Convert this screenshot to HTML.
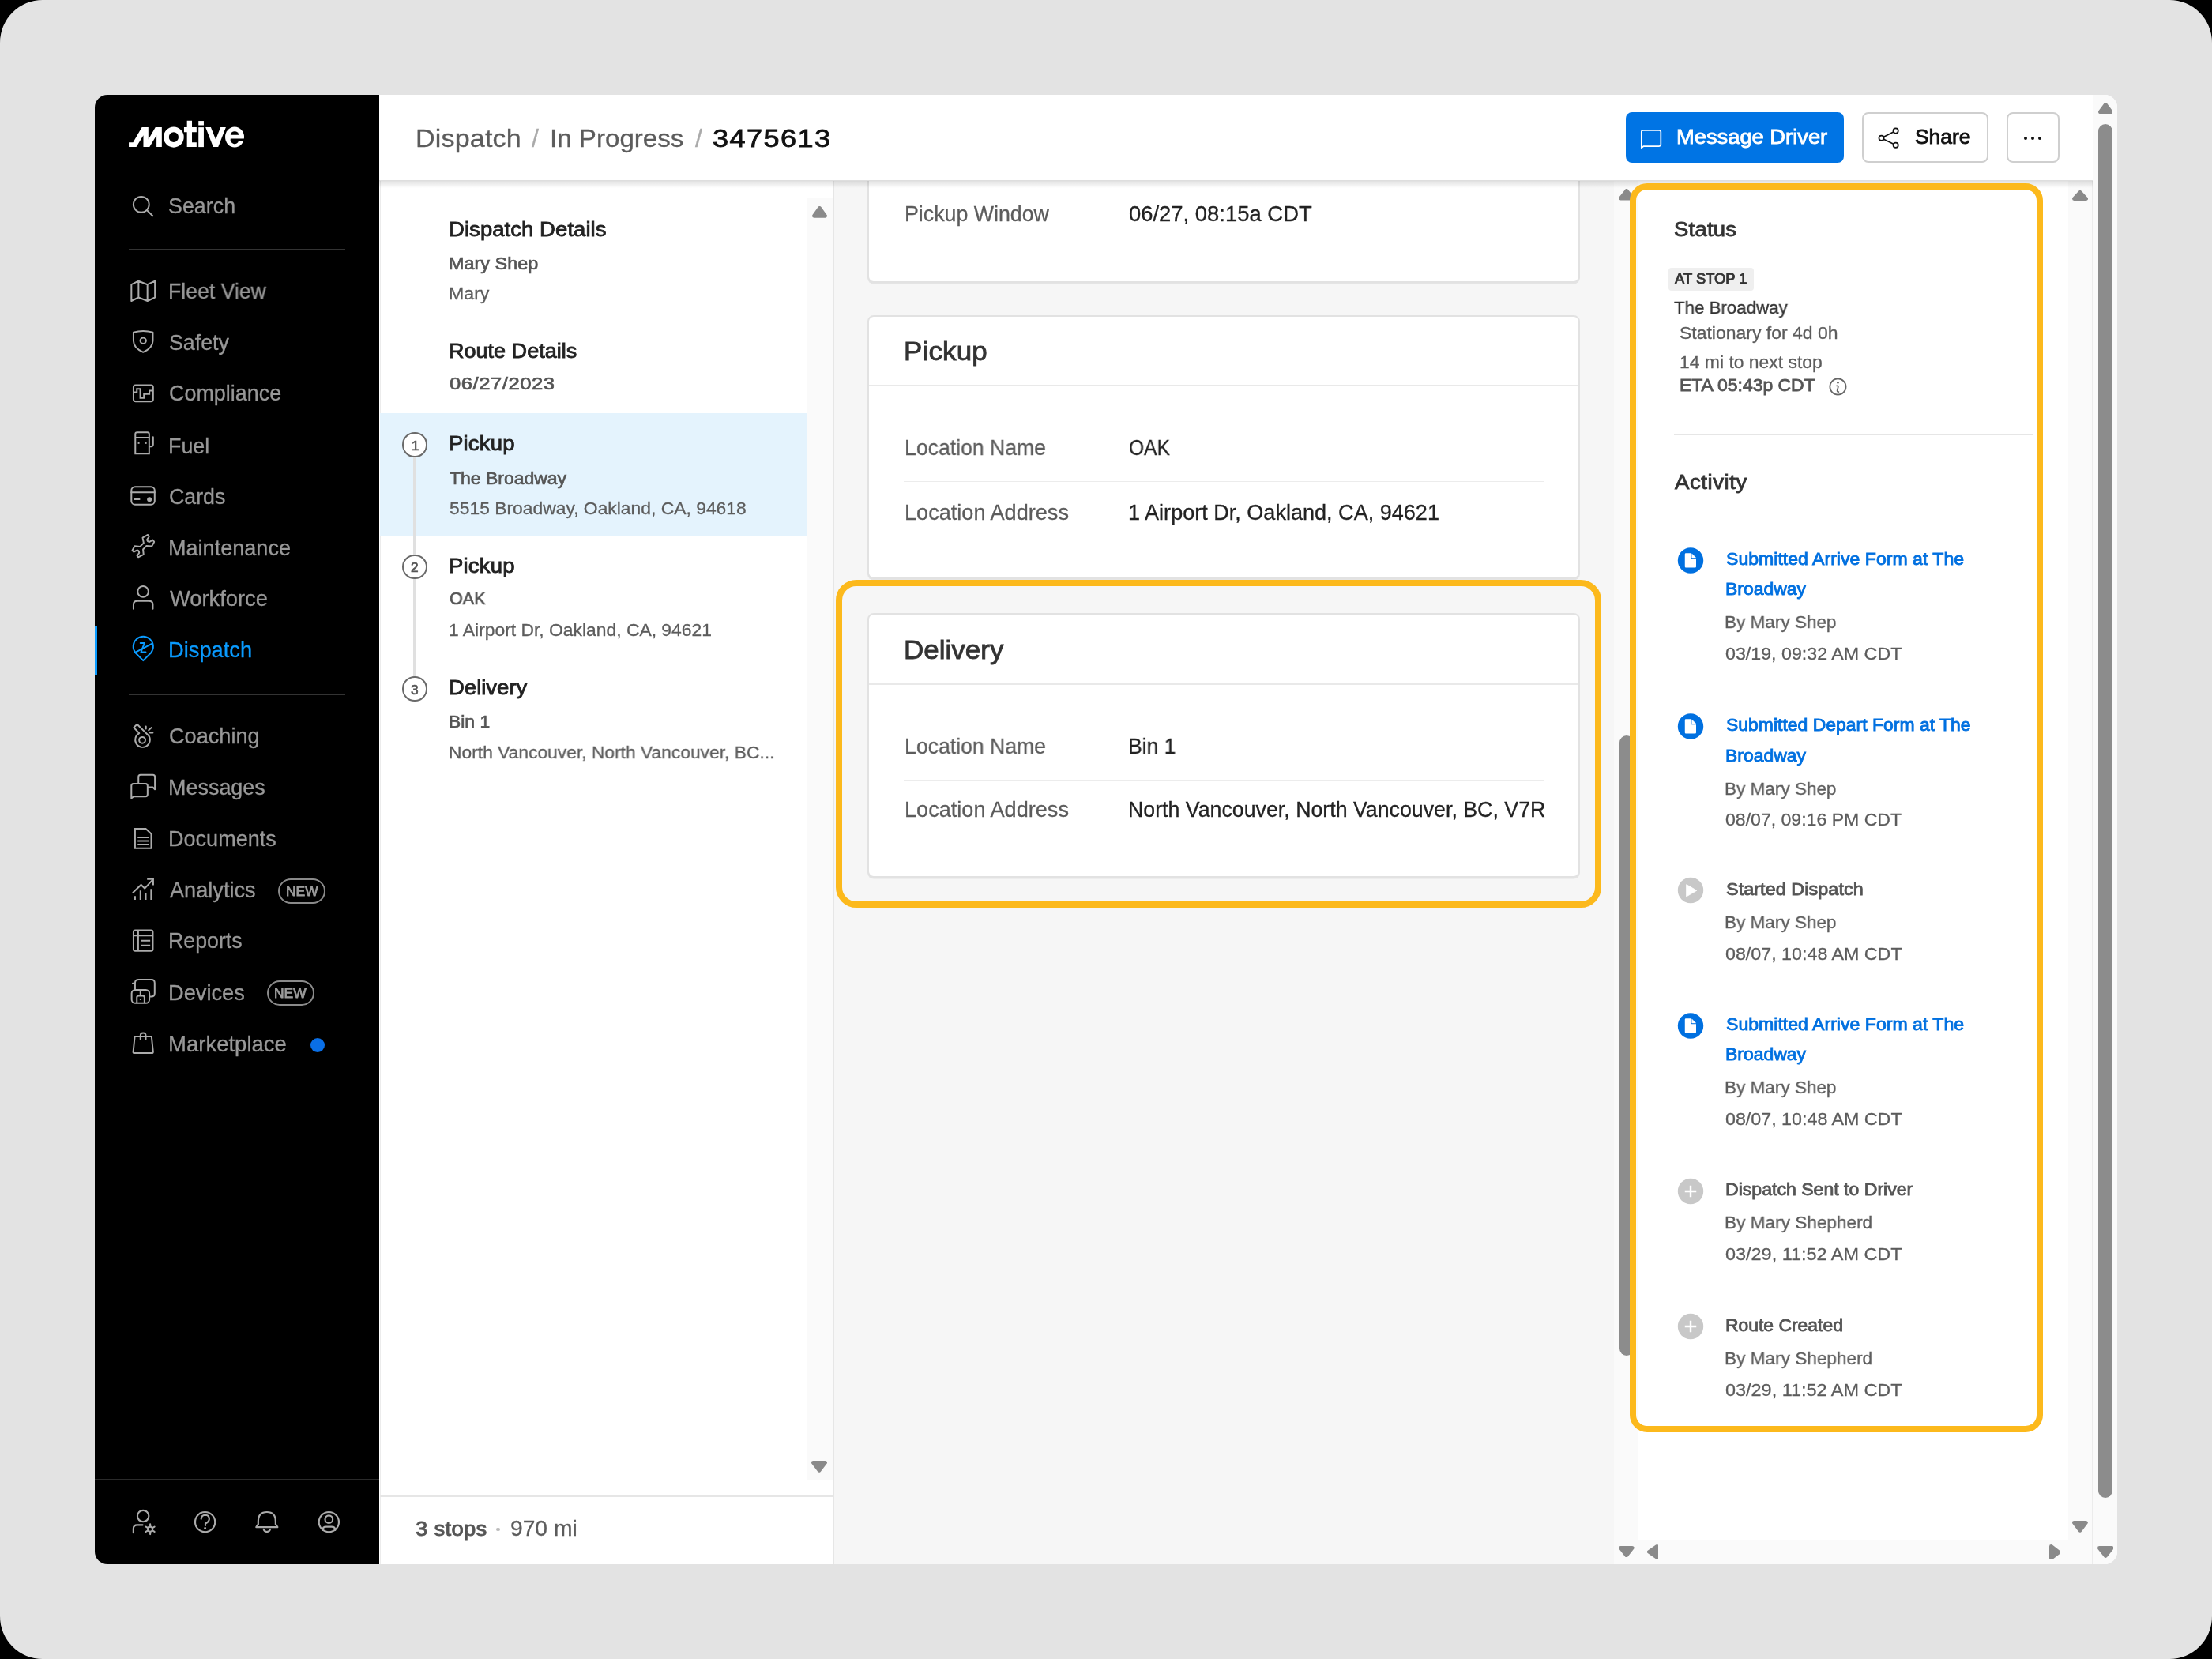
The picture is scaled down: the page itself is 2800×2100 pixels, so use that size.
<!DOCTYPE html>
<html><head><meta charset="utf-8"><style>
html,body{margin:0;padding:0;}
body{width:2800px;height:2100px;background:#000;position:relative;overflow:hidden;font-family:"Liberation Sans",sans-serif;}
.t{position:absolute;white-space:nowrap;line-height:1;will-change:transform;}
#bg{position:absolute;left:0;top:0;width:2800px;height:2100px;background:#e3e3e3;border-radius:54px;}
</style></head><body><div id="bg"></div>
<div style="position:absolute;left:120px;top:120px;width:360px;height:1860px;background:#000;border-radius:16px 0 0 16px;"></div>
<div style="position:absolute;left:480px;top:120px;width:2200px;height:1860px;background:#fff;border-radius:0 16px 16px 0;"></div>
<div style="position:absolute;left:1055px;top:229px;width:1019px;height:1751px;background:#f6f6f6;"></div>
<div style="position:absolute;left:1054px;top:229px;width:2px;height:1751px;background:#e6e6e6;"></div>
<div style="position:absolute;left:481px;top:229px;width:1px;height:1751px;background:#ececec;"></div>
<div style="position:absolute;left:1022px;top:251px;width:32px;height:1623px;background:#fafafa;"></div>
<div style="position:absolute;left:2043px;top:229px;width:31px;height:1751px;background:#fafafa;"></div>
<div style="position:absolute;left:2073px;top:229px;width:1px;height:1751px;background:#e2e2e2;"></div>
<div style="position:absolute;left:2618px;top:229px;width:30px;height:1720px;background:#fafafa;"></div>
<div style="position:absolute;left:2074px;top:1949px;width:574px;height:31px;background:#fafafa;"></div>
<div style="position:absolute;left:2648px;top:120px;width:1px;height:1860px;background:#ececec;"></div>
<div style="position:absolute;left:2649px;top:120px;width:31px;height:1860px;background:#fafafa;border-radius:0 16px 16px 0;"></div>
<div style="position:absolute;left:481px;top:523px;width:541px;height:156px;background:#e4f3fd;"></div>
<div style="position:absolute;left:481px;top:1893px;width:573px;height:2px;background:#e6e6e6;"></div>
<svg style="position:absolute;left:155px;top:140px;" width="165" height="60" viewBox="0 0 2212 804"><path fill="#fff" d="M108,618 L108,540 L180,540 L330,283 L440,283 L440,490 L560,283 L668,283 L668,618 L578,618 L578,420 L460,618 L355,618 L355,420 L235,618 Z"/><path fill="#fff" fill-rule="evenodd" d="M698,450 A172,175 0 1 0 1042,450 A172,175 0 1 0 698,450 Z M788,450 A82,86 0 1 0 952,450 A82,86 0 1 0 788,450 Z"/><path fill="#fff" d="M1095,170 H1180 V283 H1258 V365 H1180 V540 H1258 V618 H1095 V365 H1045 V283 H1095 Z"/><rect fill="#fff" x="1290" y="175" width="90" height="73"/><rect fill="#fff" x="1290" y="283" width="90" height="335"/><path fill="#fff" d="M1410,283 H1500 L1583,490 L1665,283 H1755 L1625,618 H1540 Z"/><ellipse fill="#fff" cx="1904" cy="449" rx="161" ry="174"/><path fill="#000" d="M1834,411 A70,58 0 0 1 1974,411 Z"/><path fill="#000" d="M1834,475 H2070 V511 H1972 A70,72 0 0 1 1834,475 Z"/></svg>
<svg style="position:absolute;left:160px;top:240px;" width="45" height="150" viewBox="0 0 498 1659"><g fill="none" stroke="#ababab" stroke-width="22" stroke-linecap="round" stroke-linejoin="round"><circle cx="208" cy="208" r="110"/><line x1="292" y1="292" x2="368" y2="368"/><path d="M70,1330 L170,1280 L295,1330 L400,1280 L400,1510 L295,1560 L170,1510 L70,1560 Z M170,1280 V1510 M295,1330 V1560"/></g></svg>
<div class="t" style="left:213.49px;top:247.95px;font-size:26.76px;color:#989898;-webkit-text-stroke:0.3px #989898;transform:scaleX(1.0037);transform-origin:0 0;">Search</div>
<div style="position:absolute;left:163px;top:315px;width:274px;height:2px;background:#333;"></div>
<div style="position:absolute;left:163px;top:878px;width:274px;height:2px;background:#333;"></div>
<svg style="position:absolute;left:160px;top:415px;" width="45" height="110" viewBox="0 0 679 1659"><g fill="none" stroke="#ababab" stroke-width="30" stroke-linecap="round" stroke-linejoin="round"><path d="M135,85 Q320,35 505,85 V250 Q505,385 320,465 Q135,385 135,250 Z"/><circle cx="320" cy="245" r="55"/><rect x="135" y="1095" width="375" height="310" rx="40"/><path d="M150,1230 H200 V1165 H265 V1340 H335 V1265 H440 V1200 H495" stroke-linecap="butt" stroke-linejoin="miter"/></g></svg>
<svg style="position:absolute;left:160px;top:540px;" width="45" height="110" viewBox="0 0 679 1659"><g fill="none" stroke="#ababab" stroke-width="30" stroke-linecap="round" stroke-linejoin="round"><path d="M170,515 V145 Q170,110 205,110 H400 Q435,110 435,145 V515 Z M170,210 H435 M435,380 H470 Q510,380 510,340 V200" stroke-linejoin="miter"/><rect x="95" y="1150" width="445" height="340" rx="70"/><path d="M95,1255 H540 M155,1388 H250"/></g><rect x="220" y="300" width="30" height="30" fill="#ababab"/><rect x="357" y="300" width="30" height="30" fill="#ababab"/><circle cx="440" cy="1390" r="45" fill="#ababab"/></svg>
<svg style="position:absolute;left:160px;top:670px;" width="45" height="110" viewBox="0 0 679 1659"><g fill="none" stroke="#ababab" stroke-width="30" stroke-linecap="round" stroke-linejoin="round"><path d="M310,160 L410,105 L432,140 L395,195 Q400,240 440,240 L505,205 L530,240 L485,325 L380,318 L318,385 L328,480 L228,532 L205,505 L245,450 Q240,400 200,400 L140,432 L112,405 L158,320 L262,330 L330,262 Z"/><circle cx="318" cy="1190" r="103"/><path d="M135,1520 V1440 Q135,1370 205,1370 H435 Q505,1370 505,1440 V1520"/></g></svg>
<svg style="position:absolute;left:160px;top:800px;" width="45" height="155" viewBox="0 0 482 1659"><g fill="none" stroke="#0a9bff" stroke-width="21" stroke-linecap="round" stroke-linejoin="round"><path d="M122,280 A135,135 0 1 1 334,280 L228,386 Z"/><path d="M130,272 L345,158"/><path d="M190,150 H245 L198,272 H262"/></g><g fill="none" stroke="#ababab" stroke-width="21" stroke-linecap="round" stroke-linejoin="round"><path d="M145,1250 L100,1295 L175,1372 A100,100 0 1 0 300,1402 Z"/><circle cx="215" cy="1465" r="42"/><path d="M265,1280 V1312 M302,1330 L338,1297 M320,1365 H358"/></g></svg>
<svg style="position:absolute;left:160px;top:975px;" width="45" height="110" viewBox="0 0 679 1659"><g fill="none" stroke="#ababab" stroke-width="30" stroke-linecap="round" stroke-linejoin="round"><path d="M230,245 V125 Q230,85 270,85 H505 Q545,85 545,125 V365 L505,325 H420"/><path d="M95,535 V295 Q95,255 135,255 H365 Q405,255 405,295 V460 Q405,500 365,500 H140 Z"/><path d="M165,1490 V1115 H370 L475,1215 V1490 Z" stroke-linejoin="miter" stroke-linecap="butt"/><path d="M215,1283 H425 M215,1350 H425 M215,1418 H425" stroke-linecap="butt"/></g></svg>
<svg style="position:absolute;left:160px;top:1105px;" width="45" height="110" viewBox="0 0 679 1659"><g fill="none" stroke="#ababab" stroke-width="30" stroke-linejoin="miter"><path d="M120,380 L280,225 L350,295 L505,125"/><path d="M395,117 H512 V235"/><path d="M165,440 V512 M268,335 V512 M370,375 V512 M473,305 V512"/><rect x="135" y="1095" width="370" height="395" rx="35"/><path d="M135,1195 H505 M225,1095 V1490 M280,1295 H455 M280,1385 H455"/></g></svg>
<svg style="position:absolute;left:160px;top:1235px;" width="45" height="110" viewBox="0 0 679 1659"><g fill="none" stroke="#ababab" stroke-width="30" stroke-linecap="round" stroke-linejoin="round"><path d="M165,265 V140 Q165,75 235,75 H475 Q540,75 540,140 V335 Q540,400 475,400 H445 M120,145 H165"/><rect x="100" y="270" width="340" height="255" rx="70"/><path d="M200,510 V420 Q200,385 235,385 H310 Q345,385 345,420 V510 M268,270 V385"/><path d="M160,1160 H480 L510,1455 Q512,1480 485,1480 H155 Q128,1480 130,1455 Z"/><path d="M268,1215 V1145 Q268,1095 320,1095 Q370,1095 370,1145 V1215"/></g><rect x="255" y="438" width="28" height="28" fill="#ababab"/></svg>
<div class="t" style="left:212.75px;top:356.45px;font-size:26.76px;color:#989898;-webkit-text-stroke:0.3px #989898;transform:scaleX(0.9950);transform-origin:0 0;">Fleet View</div>
<div class="t" style="left:213.74px;top:421.45px;font-size:26.76px;color:#989898;-webkit-text-stroke:0.3px #989898;">Safety</div>
<div class="t" style="left:213.60px;top:484.95px;font-size:26.76px;color:#989898;-webkit-text-stroke:0.3px #989898;transform:scaleX(1.0062);transform-origin:0 0;">Compliance</div>
<div class="t" style="left:212.74px;top:551.95px;font-size:26.76px;color:#989898;-webkit-text-stroke:0.3px #989898;transform:scaleX(1.0033);transform-origin:0 0;">Fuel</div>
<div class="t" style="left:213.62px;top:615.95px;font-size:26.76px;color:#989898;-webkit-text-stroke:0.3px #989898;transform:scaleX(0.9940);transform-origin:0 0;">Cards</div>
<div class="t" style="left:212.72px;top:680.95px;font-size:26.76px;color:#989898;-webkit-text-stroke:0.3px #989898;transform:scaleX(1.0121);transform-origin:0 0;">Maintenance</div>
<div class="t" style="left:214.82px;top:744.95px;font-size:26.76px;color:#989898;-webkit-text-stroke:0.3px #989898;transform:scaleX(1.0210);transform-origin:0 0;">Workforce</div>
<div class="t" style="left:212.70px;top:809.95px;font-size:26.76px;color:#0a9bff;-webkit-text-stroke:0.3px #0a9bff;transform:scaleX(1.0196);transform-origin:0 0;">Dispatch</div>
<div class="t" style="left:213.59px;top:918.95px;font-size:26.76px;color:#989898;-webkit-text-stroke:0.3px #989898;transform:scaleX(1.0148);transform-origin:0 0;">Coaching</div>
<div class="t" style="left:212.73px;top:983.95px;font-size:26.76px;color:#989898;-webkit-text-stroke:0.3px #989898;transform:scaleX(1.0073);transform-origin:0 0;">Messages</div>
<div class="t" style="left:212.72px;top:1048.95px;font-size:26.76px;color:#989898;-webkit-text-stroke:0.3px #989898;transform:scaleX(1.0112);transform-origin:0 0;">Documents</div>
<div class="t" style="left:214.88px;top:1113.95px;font-size:26.76px;color:#989898;-webkit-text-stroke:0.3px #989898;transform:scaleX(1.0149);transform-origin:0 0;">Analytics</div>
<div class="t" style="left:212.74px;top:1177.95px;font-size:26.76px;color:#989898;-webkit-text-stroke:0.3px #989898;">Reports</div>
<div class="t" style="left:212.71px;top:1243.95px;font-size:26.76px;color:#989898;-webkit-text-stroke:0.3px #989898;transform:scaleX(1.0177);transform-origin:0 0;">Devices</div>
<div class="t" style="left:212.68px;top:1308.95px;font-size:26.76px;color:#989898;-webkit-text-stroke:0.3px #989898;transform:scaleX(1.0285);transform-origin:0 0;">Marketplace</div>
<div style="position:absolute;left:120px;top:792px;width:3px;height:63px;background:#0a9bff;"></div>
<div style="position:absolute;left:352px;top:1112px;width:60px;height:32px;border:2px solid #8a8a8a;border-radius:16px;box-sizing:border-box;"></div>
<div class="t" style="left:361.79px;top:1119.73px;font-size:17.26px;color:#9c9c9c;-webkit-text-stroke:0.85px #9c9c9c;transform:scaleX(1.0088);transform-origin:0 0;">NEW</div>
<div style="position:absolute;left:337.5px;top:1241px;width:60.5px;height:32px;border:2px solid #8a8a8a;border-radius:16px;box-sizing:border-box;"></div>
<div class="t" style="left:347.29px;top:1248.73px;font-size:17.26px;color:#9c9c9c;-webkit-text-stroke:0.85px #9c9c9c;transform:scaleX(1.0088);transform-origin:0 0;">NEW</div>
<div style="position:absolute;left:393px;top:1313.5px;width:18px;height:18px;border-radius:50%;background:#0a6fe6"></div>
<div style="position:absolute;left:120px;top:1872px;width:360px;height:2px;background:#2a2a2a;"></div>
<svg style="position:absolute;left:160px;top:1900px;" width="280" height="55" viewBox="0 0 2212 434"><g fill="none" stroke="#ababab" stroke-width="17" stroke-linecap="round" stroke-linejoin="round"><circle cx="167" cy="150" r="57"/><path d="M70,318 V278 Q70,240 108,240 H162"/><circle cx="238" cy="282" r="24"/><path d="M238,232 V252 M238,312 V332 M195,257 L212,267 M264,297 L281,307 M195,307 L212,297 M264,267 L281,257"/><circle cx="787" cy="210" r="100"/><path d="M748,180 Q750,140 790,140 Q830,142 828,182 Q826,208 790,225 V245"/><path d="M1298,262 L1318,232 V205 Q1318,110 1405,110 Q1492,110 1492,205 V232 L1512,262 Z"/><path d="M1372,283 A34,34 0 0 0 1438,283"/><circle cx="2025" cy="210" r="100"/><circle cx="2025" cy="183" r="38"/><path d="M1962,292 Q1962,258 1998,258 H2052 Q2088,258 2088,292"/></g><circle cx="787" cy="272" r="11" fill="#ababab"/></svg>
<div style="position:absolute;left:480px;top:120px;width:2169px;height:109px;background:#fff;z-index:5;"></div>
<div style="position:absolute;left:480px;top:228px;width:2169px;height:1px;background:rgba(0,0,0,0.13);z-index:5;"></div>
<div style="position:absolute;left:480px;top:229px;width:2169px;height:9px;background:linear-gradient(rgba(0,0,0,0.12),rgba(0,0,0,0));z-index:5;"></div>
<div class="t" style="left:526.15px;top:159.37px;font-size:32.16px;color:#5c5c5c;-webkit-text-stroke:0.3px #5c5c5c;letter-spacing:0.143px;transform:scaleX(1.0600);transform-origin:0 0;z-index:6;">Dispatch</div>
<div class="t" style="left:673.45px;top:159.37px;font-size:32.16px;color:#aaa;-webkit-text-stroke:0.3px #aaa;z-index:6;">/</div>
<div class="t" style="left:695.89px;top:159.37px;font-size:32.16px;color:#5c5c5c;-webkit-text-stroke:0.3px #5c5c5c;transform:scaleX(1.0303);transform-origin:0 0;z-index:6;">In Progress</div>
<div class="t" style="left:879.95px;top:159.37px;font-size:32.16px;color:#aaa;-webkit-text-stroke:0.3px #aaa;z-index:6;">/</div>
<div class="t" style="left:901.94px;top:159.78px;font-size:31.36px;color:#111;-webkit-text-stroke:0.85px #111;letter-spacing:1.251px;transform:scaleX(1.1500);transform-origin:0 0;z-index:6;">3475613</div>
<div style="position:absolute;left:2058px;top:142px;width:276px;height:64px;background:#0074e4;border-radius:8px;z-index:6;"></div>
<svg style="position:absolute;left:2070px;top:155px;z-index:7;" width="40" height="40" viewBox="0 0 1659 1659"><path d="M325,1335 V500 Q325,410 415,410 H1250 Q1340,410 1340,500 V1155 Q1340,1245 1250,1245 H440 Z" fill="none" stroke="#fff" stroke-width="72" stroke-linejoin="round"/></svg>
<div class="t" style="left:2122.49px;top:161.06px;font-size:25.96px;color:#fff;-webkit-text-stroke:0.85px #fff;transform:scaleX(1.0520);transform-origin:0 0;z-index:7;">Message Driver</div>
<div style="position:absolute;left:2357px;top:142px;width:160px;height:64px;border:2px solid #cfcfcf;border-radius:8px;box-sizing:border-box;z-index:6;"></div>
<svg style="position:absolute;left:2370px;top:155px;z-index:7;" width="40" height="40" viewBox="0 0 1659 1659"><g fill="none" stroke="#111" stroke-width="72"><circle cx="1230" cy="440" r="130"/><circle cx="480" cy="820" r="130"/><circle cx="1230" cy="1190" r="130"/><path d="M600,760 L1110,500 M600,880 L1110,1130"/></g></svg>
<div class="t" style="left:2424.04px;top:161.06px;font-size:25.96px;color:#111;-webkit-text-stroke:0.85px #111;transform:scaleX(1.0171);transform-origin:0 0;z-index:7;">Share</div>
<div style="position:absolute;left:2540px;top:142px;width:67px;height:64px;border:2px solid #cfcfcf;border-radius:8px;box-sizing:border-box;z-index:6;"></div>
<div style="position:absolute;left:2561.8px;top:172.6px;width:4.4px;height:4.4px;border-radius:50%;background:#111;z-index:7"></div>
<div style="position:absolute;left:2570.8px;top:172.6px;width:4.4px;height:4.4px;border-radius:50%;background:#111;z-index:7"></div>
<div style="position:absolute;left:2579.8px;top:172.6px;width:4.4px;height:4.4px;border-radius:50%;background:#111;z-index:7"></div>
<div class="t" style="left:567.58px;top:277.66px;font-size:25.96px;color:#222;-webkit-text-stroke:0.85px #222;letter-spacing:0.046px;transform:scaleX(1.0600);transform-origin:0 0;">Dispatch Details</div>
<div class="t" style="left:567.83px;top:322.75px;font-size:22.28px;color:#555;-webkit-text-stroke:0.7px #555;transform:scaleX(1.0520);transform-origin:0 0;">Mary Shep</div>
<div class="t" style="left:567.64px;top:359.66px;font-size:22.86px;color:#5c5c5c;-webkit-text-stroke:0.3px #5c5c5c;transform:scaleX(1.0128);transform-origin:0 0;">Mary</div>
<div class="t" style="left:567.61px;top:431.56px;font-size:25.96px;color:#222;-webkit-text-stroke:0.85px #222;transform:scaleX(1.0413);transform-origin:0 0;">Route Details</div>
<div class="t" style="left:568.78px;top:475.35px;font-size:22.28px;color:#555;-webkit-text-stroke:0.7px #555;letter-spacing:0.462px;transform:scaleX(1.1500);transform-origin:0 0;">06/27/2023</div>
<div style="position:absolute;left:523.4px;top:578px;width:3px;height:139px;background:#e0e0e0;"></div>
<div style="position:absolute;left:523.4px;top:733px;width:3px;height:139px;background:#e0e0e0;"></div>
<div style="position:absolute;left:509.15px;top:547.35px;width:31.5px;height:31.5px;border-radius:50%;border:2px solid #6a6a6a;background:#fff;box-sizing:border-box"></div>
<div class="t" style="left:521.05px;top:555.59px;font-size:17.28px;color:#555;-webkit-text-stroke:0.7px #555;">1</div>
<div class="t" style="left:567.68px;top:548.86px;font-size:25.96px;color:#222;-webkit-text-stroke:0.85px #222;letter-spacing:0.181px;transform:scaleX(1.0600);transform-origin:0 0;">Pickup</div>
<div class="t" style="left:569.34px;top:594.95px;font-size:22.28px;color:#555;-webkit-text-stroke:0.7px #555;transform:scaleX(1.0312);transform-origin:0 0;">The Broadway</div>
<div class="t" style="left:568.73px;top:631.56px;font-size:22.86px;color:#5c5c5c;-webkit-text-stroke:0.3px #5c5c5c;">5515 Broadway, Oakland, CA, 94618</div>
<div style="position:absolute;left:509.15px;top:701.65px;width:31.5px;height:31.5px;border-radius:50%;border:2px solid #6a6a6a;background:#fff;box-sizing:border-box"></div>
<div class="t" style="left:519.79px;top:709.89px;font-size:17.28px;color:#555;-webkit-text-stroke:0.7px #555;">2</div>
<div class="t" style="left:567.68px;top:703.56px;font-size:25.96px;color:#222;-webkit-text-stroke:0.85px #222;letter-spacing:0.181px;transform:scaleX(1.0600);transform-origin:0 0;">Pickup</div>
<div class="t" style="left:568.81px;top:747.45px;font-size:22.28px;color:#555;-webkit-text-stroke:0.7px #555;transform:scaleX(0.9669);transform-origin:0 0;">OAK</div>
<div class="t" style="left:567.93px;top:786.26px;font-size:22.86px;color:#5c5c5c;-webkit-text-stroke:0.3px #5c5c5c;">1 Airport Dr, Oakland, CA, 94621</div>
<div style="position:absolute;left:509.15px;top:856.35px;width:31.5px;height:31.5px;border-radius:50%;border:2px solid #6a6a6a;background:#fff;box-sizing:border-box"></div>
<div class="t" style="left:520.00px;top:864.59px;font-size:17.28px;color:#555;-webkit-text-stroke:0.7px #555;">3</div>
<div class="t" style="left:567.68px;top:858.26px;font-size:25.96px;color:#222;-webkit-text-stroke:0.85px #222;transform:scaleX(1.0591);transform-origin:0 0;">Delivery</div>
<div class="t" style="left:567.97px;top:902.95px;font-size:22.28px;color:#555;-webkit-text-stroke:0.7px #555;transform:scaleX(1.0278);transform-origin:0 0;">Bin 1</div>
<div class="t" style="left:567.77px;top:940.66px;font-size:22.86px;color:#5c5c5c;-webkit-text-stroke:0.3px #5c5c5c;transform:scaleX(0.9978);transform-origin:0 0;">North Vancouver, North Vancouver, BC...</div>
<div class="t" style="left:526.32px;top:1922.86px;font-size:25.96px;color:#555;-webkit-text-stroke:0.85px #555;letter-spacing:0.256px;transform:scaleX(1.0600);transform-origin:0 0;">3 stops</div>
<div style="position:absolute;left:628px;top:1933.5px;width:4.5px;height:4.5px;border-radius:50%;background:#bbb"></div>
<div class="t" style="left:645.62px;top:1922.45px;font-size:26.76px;color:#5c5c5c;-webkit-text-stroke:0.3px #5c5c5c;transform:scaleX(1.0544);transform-origin:0 0;">970 mi</div>
<div style="position:absolute;left:1098.3px;top:180px;width:902px;height:178px;background:#fff;border:2px solid #e2e2e2;box-sizing:border-box;box-shadow:0 1.5px 0 rgba(0,0,0,0.07);border-radius:8px;"></div>
<div class="t" style="left:1144.75px;top:257.75px;font-size:26.76px;color:#5c5c5c;-webkit-text-stroke:0.3px #5c5c5c;">Pickup Window</div>
<div class="t" style="left:1429.16px;top:257.75px;font-size:26.76px;color:#222;-webkit-text-stroke:0.3px #222;transform:scaleX(1.0250);transform-origin:0 0;">06/27, 08:15a CDT</div>
<div style="position:absolute;left:1098.3px;top:398.6px;width:902px;height:334.5px;background:#fff;border:2px solid #e2e2e2;box-sizing:border-box;box-shadow:0 1.5px 0 rgba(0,0,0,0.07);border-radius:8px;"></div>
<div style="position:absolute;left:1100.3px;top:487.1px;width:898px;height:2px;background:#e9e9e9;"></div>
<div class="t" style="left:1144.37px;top:428.72px;font-size:32.96px;color:#333;-webkit-text-stroke:0.85px #333;letter-spacing:0.170px;transform:scaleX(1.0600);transform-origin:0 0;">Pickup</div>
<div class="t" style="left:1144.75px;top:553.95px;font-size:26.76px;color:#5c5c5c;-webkit-text-stroke:0.3px #5c5c5c;transform:scaleX(0.9947);transform-origin:0 0;">Location Name</div>
<div class="t" style="left:1429.07px;top:553.95px;font-size:26.76px;color:#222;-webkit-text-stroke:0.3px #222;transform:scaleX(0.9179);transform-origin:0 0;">OAK</div>
<div style="position:absolute;left:1144px;top:608.9000000000001px;width:811px;height:1.5px;background:#ececec;"></div>
<div class="t" style="left:1144.71px;top:635.65px;font-size:26.76px;color:#5c5c5c;-webkit-text-stroke:0.3px #5c5c5c;transform:scaleX(1.0133);transform-origin:0 0;">Location Address</div>
<div class="t" style="left:1428.22px;top:635.65px;font-size:26.76px;color:#222;-webkit-text-stroke:0.3px #222;transform:scaleX(1.0112);transform-origin:0 0;">1 Airport Dr, Oakland, CA, 94621</div>
<div style="position:absolute;left:1098.3px;top:776.4px;width:902px;height:334.5px;background:#fff;border:2px solid #e2e2e2;box-sizing:border-box;box-shadow:0 1.5px 0 rgba(0,0,0,0.07);border-radius:8px;"></div>
<div style="position:absolute;left:1100.3px;top:864.9px;width:898px;height:2px;background:#e9e9e9;"></div>
<div class="t" style="left:1144.37px;top:806.52px;font-size:32.96px;color:#333;-webkit-text-stroke:0.85px #333;letter-spacing:0.034px;transform:scaleX(1.0600);transform-origin:0 0;">Delivery</div>
<div class="t" style="left:1144.75px;top:931.75px;font-size:26.76px;color:#5c5c5c;-webkit-text-stroke:0.3px #5c5c5c;transform:scaleX(0.9947);transform-origin:0 0;">Location Name</div>
<div class="t" style="left:1428.06px;top:931.75px;font-size:26.76px;color:#222;-webkit-text-stroke:0.3px #222;transform:scaleX(0.9918);transform-origin:0 0;">Bin 1</div>
<div style="position:absolute;left:1144px;top:986.7px;width:811px;height:1.5px;background:#ececec;"></div>
<div class="t" style="left:1144.71px;top:1011.75px;font-size:26.76px;color:#5c5c5c;-webkit-text-stroke:0.3px #5c5c5c;transform:scaleX(1.0133);transform-origin:0 0;">Location Address</div>
<div class="t" style="left:1428.04px;top:1011.75px;font-size:26.76px;color:#222;-webkit-text-stroke:0.3px #222;">North Vancouver, North Vancouver, BC, V7R</div>
<div class="t" style="left:2119.01px;top:277.66px;font-size:25.96px;color:#333;-webkit-text-stroke:0.85px #333;letter-spacing:0.195px;transform:scaleX(1.0600);transform-origin:0 0;">Status</div>
<div style="position:absolute;left:2112.3px;top:339.3px;width:108px;height:28.4px;background:#efefef;border-radius:4px;"></div>
<div class="t" style="left:2120.19px;top:345.41px;font-size:17.76px;color:#333;-webkit-text-stroke:0.85px #333;transform:scaleX(1.0353);transform-origin:0 0;">AT STOP 1</div>
<div class="t" style="left:2119.44px;top:378.46px;font-size:22.86px;color:#333;-webkit-text-stroke:0.3px #333;transform:scaleX(0.9746);transform-origin:0 0;">The Broadway</div>
<div class="t" style="left:2126.42px;top:409.86px;font-size:22.86px;color:#5c5c5c;-webkit-text-stroke:0.3px #5c5c5c;transform:scaleX(1.0046);transform-origin:0 0;">Stationary for 4d 0h</div>
<div class="t" style="left:2125.73px;top:446.86px;font-size:22.86px;color:#5c5c5c;-webkit-text-stroke:0.3px #5c5c5c;transform:scaleX(1.0021);transform-origin:0 0;">14 mi to next stop</div>
<div class="t" style="left:2125.85px;top:477.46px;font-size:22.06px;color:#555;-webkit-text-stroke:0.85px #555;transform:scaleX(1.0404);transform-origin:0 0;">ETA 05:43p CDT</div>
<svg style="position:absolute;left:2310px;top:474px;" width="30" height="30" viewBox="0 0 1659 1659"><g fill="none" stroke="#666" stroke-width="95" stroke-linecap="round"><circle cx="910" cy="860" r="560"/><path d="M830,800 Q945,790 930,870 L865,1110 Q850,1200 960,1225"/></g><circle cx="910" cy="570" r="75" fill="#666"/></svg>
<div style="position:absolute;left:2119px;top:548.5px;width:455px;height:2px;background:#e6e6e6;"></div>
<div class="t" style="left:2120.18px;top:597.66px;font-size:25.96px;color:#333;-webkit-text-stroke:0.85px #333;letter-spacing:0.566px;transform:scaleX(1.0600);transform-origin:0 0;">Activity</div>
<svg style="position:absolute;left:2120px;top:690.0px;" width="40" height="40" viewBox="0 0 1659 1659"><circle cx="830" cy="810" r="672" fill="#0070e0"/><path d="M530,480 Q530,430 580,430 H840 V660 Q840,720 900,720 H1120 V1130 Q1120,1180 1070,1180 H580 Q530,1180 530,1130 Z" fill="#fff"/><path d="M900,455 L1105,660 H900 Z" fill="#fff" stroke="#fff" stroke-width="20" stroke-linejoin="round"/></svg>
<div class="t" style="left:2184.51px;top:697.06px;font-size:22.06px;color:#0070e0;-webkit-text-stroke:0.85px #0070e0;transform:scaleX(1.0471);transform-origin:0 0;">Submitted Arrive Form at The</div>
<div class="t" style="left:2183.65px;top:735.36px;font-size:22.06px;color:#0070e0;-webkit-text-stroke:0.85px #0070e0;transform:scaleX(1.0401);transform-origin:0 0;">Broadway</div>
<div class="t" style="left:2183.39px;top:776.36px;font-size:22.86px;color:#5c5c5c;-webkit-text-stroke:0.3px #5c5c5c;transform:scaleX(0.9852);transform-origin:0 0;">By Mary Shep</div>
<div class="t" style="left:2184.32px;top:816.26px;font-size:22.86px;color:#5c5c5c;-webkit-text-stroke:0.3px #5c5c5c;transform:scaleX(1.0160);transform-origin:0 0;">03/19, 09:32 AM CDT</div>
<svg style="position:absolute;left:2120px;top:899.5px;" width="40" height="40" viewBox="0 0 1659 1659"><circle cx="830" cy="810" r="672" fill="#0070e0"/><path d="M530,480 Q530,430 580,430 H840 V660 Q840,720 900,720 H1120 V1130 Q1120,1180 1070,1180 H580 Q530,1180 530,1130 Z" fill="#fff"/><path d="M900,455 L1105,660 H900 Z" fill="#fff" stroke="#fff" stroke-width="20" stroke-linejoin="round"/></svg>
<div class="t" style="left:2184.51px;top:907.26px;font-size:22.06px;color:#0070e0;-webkit-text-stroke:0.85px #0070e0;transform:scaleX(1.0411);transform-origin:0 0;">Submitted Depart Form at The</div>
<div class="t" style="left:2183.65px;top:945.56px;font-size:22.06px;color:#0070e0;-webkit-text-stroke:0.85px #0070e0;transform:scaleX(1.0401);transform-origin:0 0;">Broadway</div>
<div class="t" style="left:2183.39px;top:986.56px;font-size:22.86px;color:#5c5c5c;-webkit-text-stroke:0.3px #5c5c5c;transform:scaleX(0.9852);transform-origin:0 0;">By Mary Shep</div>
<div class="t" style="left:2184.33px;top:1026.46px;font-size:22.86px;color:#5c5c5c;-webkit-text-stroke:0.3px #5c5c5c;transform:scaleX(1.0088);transform-origin:0 0;">08/07, 09:16 PM CDT</div>
<svg style="position:absolute;left:2120px;top:1107px;" width="40" height="40" viewBox="0 0 1659 1659"><circle cx="830" cy="830" r="672" fill="#c8c8c8"/><path d="M610,525 L1150,840 L610,1155 Z" fill="#fff" stroke="#fff" stroke-width="40" stroke-linejoin="round"/></svg>
<div class="t" style="left:2184.50px;top:1114.66px;font-size:22.06px;color:#555;-webkit-text-stroke:0.85px #555;letter-spacing:0.061px;transform:scaleX(1.0600);transform-origin:0 0;">Started Dispatch</div>
<div class="t" style="left:2183.39px;top:1155.66px;font-size:22.86px;color:#5c5c5c;-webkit-text-stroke:0.3px #5c5c5c;transform:scaleX(0.9852);transform-origin:0 0;">By Mary Shep</div>
<div class="t" style="left:2184.32px;top:1195.56px;font-size:22.86px;color:#5c5c5c;-webkit-text-stroke:0.3px #5c5c5c;transform:scaleX(1.0173);transform-origin:0 0;">08/07, 10:48 AM CDT</div>
<svg style="position:absolute;left:2120px;top:1278.7px;" width="40" height="40" viewBox="0 0 1659 1659"><circle cx="830" cy="810" r="672" fill="#0070e0"/><path d="M530,480 Q530,430 580,430 H840 V660 Q840,720 900,720 H1120 V1130 Q1120,1180 1070,1180 H580 Q530,1180 530,1130 Z" fill="#fff"/><path d="M900,455 L1105,660 H900 Z" fill="#fff" stroke="#fff" stroke-width="20" stroke-linejoin="round"/></svg>
<div class="t" style="left:2184.51px;top:1285.96px;font-size:22.06px;color:#0070e0;-webkit-text-stroke:0.85px #0070e0;transform:scaleX(1.0471);transform-origin:0 0;">Submitted Arrive Form at The</div>
<div class="t" style="left:2183.65px;top:1324.26px;font-size:22.06px;color:#0070e0;-webkit-text-stroke:0.85px #0070e0;transform:scaleX(1.0401);transform-origin:0 0;">Broadway</div>
<div class="t" style="left:2183.39px;top:1365.26px;font-size:22.86px;color:#5c5c5c;-webkit-text-stroke:0.3px #5c5c5c;transform:scaleX(0.9852);transform-origin:0 0;">By Mary Shep</div>
<div class="t" style="left:2184.32px;top:1405.16px;font-size:22.86px;color:#5c5c5c;-webkit-text-stroke:0.3px #5c5c5c;transform:scaleX(1.0173);transform-origin:0 0;">08/07, 10:48 AM CDT</div>
<svg style="position:absolute;left:2120px;top:1487.7px;" width="40" height="40" viewBox="0 0 1659 1659"><circle cx="830" cy="830" r="672" fill="#c8c8c8"/><path d="M830,530 V1130 M530,830 H1130" stroke="#fff" stroke-width="100"/></svg>
<div class="t" style="left:2183.64px;top:1495.36px;font-size:22.06px;color:#555;-webkit-text-stroke:0.85px #555;transform:scaleX(1.0466);transform-origin:0 0;">Dispatch Sent to Driver</div>
<div class="t" style="left:2183.38px;top:1536.36px;font-size:22.86px;color:#5c5c5c;-webkit-text-stroke:0.3px #5c5c5c;transform:scaleX(0.9887);transform-origin:0 0;">By Mary Shepherd</div>
<div class="t" style="left:2184.32px;top:1576.26px;font-size:22.86px;color:#5c5c5c;-webkit-text-stroke:0.3px #5c5c5c;transform:scaleX(1.0251);transform-origin:0 0;">03/29, 11:52 AM CDT</div>
<svg style="position:absolute;left:2120px;top:1659px;" width="40" height="40" viewBox="0 0 1659 1659"><circle cx="830" cy="830" r="672" fill="#c8c8c8"/><path d="M830,530 V1130 M530,830 H1130" stroke="#fff" stroke-width="100"/></svg>
<div class="t" style="left:2183.65px;top:1666.96px;font-size:22.06px;color:#555;-webkit-text-stroke:0.85px #555;transform:scaleX(1.0381);transform-origin:0 0;">Route Created</div>
<div class="t" style="left:2183.38px;top:1707.96px;font-size:22.86px;color:#5c5c5c;-webkit-text-stroke:0.3px #5c5c5c;transform:scaleX(0.9887);transform-origin:0 0;">By Mary Shepherd</div>
<div class="t" style="left:2184.32px;top:1747.86px;font-size:22.86px;color:#5c5c5c;-webkit-text-stroke:0.3px #5c5c5c;transform:scaleX(1.0251);transform-origin:0 0;">03/29, 11:52 AM CDT</div>
<svg style="position:absolute;left:1028px;top:261px;z-index:8" width="19.0" height="14.7"><polygon points="2.4,12.299999999999988 9.5,2.4 16.6,12.299999999999988" fill="#8a8a8a" stroke="#8a8a8a" stroke-width="4.8" stroke-linejoin="round"/></svg>
<svg style="position:absolute;left:1027.4px;top:1849.3px;z-index:8" width="20.0" height="14.7"><polygon points="2.4,2.4 10.0,12.300000000000045 17.6,2.4" fill="#8a8a8a" stroke="#8a8a8a" stroke-width="4.8" stroke-linejoin="round"/></svg>
<svg style="position:absolute;left:2048.5px;top:239px;z-index:8" width="20.0" height="14.5"><polygon points="2.4,12.1 10.0,2.4 17.6,12.1" fill="#8a8a8a" stroke="#8a8a8a" stroke-width="4.8" stroke-linejoin="round"/></svg>
<svg style="position:absolute;left:2049px;top:1957px;z-index:8" width="19.6" height="14.3"><polygon points="2.4,2.4 9.799999999999955,11.899999999999954 17.19999999999991,2.4" fill="#8a8a8a" stroke="#8a8a8a" stroke-width="4.8" stroke-linejoin="round"/></svg>
<svg style="position:absolute;left:2623px;top:241px;z-index:8" width="20.0" height="13.0"><polygon points="2.4,10.6 10.0,2.4 17.6,10.6" fill="#8a8a8a" stroke="#8a8a8a" stroke-width="4.8" stroke-linejoin="round"/></svg>
<svg style="position:absolute;left:2623px;top:1925px;z-index:8" width="19.8" height="14.7"><polygon points="2.4,2.4 9.900000000000091,12.300000000000045 17.400000000000183,2.4" fill="#8a8a8a" stroke="#8a8a8a" stroke-width="4.8" stroke-linejoin="round"/></svg>
<svg style="position:absolute;left:2084.6px;top:1955px;z-index:8" width="14.8" height="18.7"><polygon points="12.400000000000182,2.4 2.4,9.350000000000023 12.400000000000182,16.300000000000047" fill="#8a8a8a" stroke="#8a8a8a" stroke-width="4.8" stroke-linejoin="round"/></svg>
<svg style="position:absolute;left:2593.5px;top:1954.6px;z-index:8" width="14.5" height="19.6"><polygon points="2.4,2.4 12.1,9.800000000000068 2.4,17.200000000000138" fill="#8a8a8a" stroke="#8a8a8a" stroke-width="4.8" stroke-linejoin="round"/></svg>
<svg style="position:absolute;left:2655.5px;top:130.4px;z-index:8" width="18.5" height="14.1"><polygon points="2.4,11.699999999999994 9.25,2.4 16.1,11.699999999999994" fill="#8a8a8a" stroke="#8a8a8a" stroke-width="4.8" stroke-linejoin="round"/></svg>
<svg style="position:absolute;left:2654.8px;top:1957px;z-index:8" width="20.6" height="14.8"><polygon points="2.4,2.4 10.299999999999955,12.399999999999954 18.19999999999991,2.4" fill="#8a8a8a" stroke="#8a8a8a" stroke-width="4.8" stroke-linejoin="round"/></svg>
<div style="position:absolute;left:2656px;top:157px;width:17.5px;height:1739px;background:#8c8c8c;border-radius:9px;z-index:8;"></div>
<div style="position:absolute;left:2050px;top:931px;width:17.5px;height:785px;background:#8c8c8c;border-radius:9px;"></div>
<div style="position:absolute;left:1058px;top:734px;width:968.5px;height:415px;border:8px solid #fcb91c;border-radius:26px;box-sizing:border-box;z-index:9;"></div>
<div style="position:absolute;left:2062.5px;top:232px;width:523.5px;height:1581.4px;border:8px solid #fcb91c;border-radius:22px;box-sizing:border-box;z-index:9;"></div>
</body></html>
